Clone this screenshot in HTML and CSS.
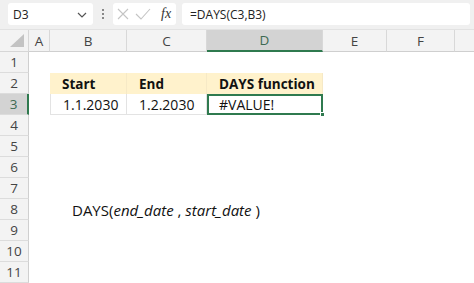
FILE: index.html
```html
<!DOCTYPE html>
<html>
<head>
<meta charset="utf-8">
<link rel="stylesheet" href="styles.css">
</head>
<body>
<div class="app">
  <div class="fbar">
    <div class="namebox"><span>D3</span>
      <svg class="chev" width="10" height="6" viewBox="0 0 10 6"><path d="M1 1 L5 5 L9 1" fill="none" stroke="#555" stroke-width="1.2"/></svg>
    </div>
    <div class="dots">
      <svg width="4" height="12" viewBox="0 0 4 12"><circle cx="2" cy="2" r="1" fill="#666"/><circle cx="2" cy="6" r="1" fill="#666"/><circle cx="2" cy="10" r="1" fill="#666"/></svg>
    </div>
    <div class="btnbox">
      <svg width="14" height="14" viewBox="0 0 14 14"><path d="M2 2 L12 12 M12 2 L2 12" stroke="#c4c4c4" stroke-width="1.1" fill="none"/></svg>
      <svg width="16" height="14" viewBox="0 0 16 14"><path d="M1 7 L6 12 L15 2" stroke="#c4c4c4" stroke-width="1.1" fill="none"/></svg>
      <span class="fx">fx</span>
    </div>
    <div class="formula">=DAYS(C3,B3)</div>
  </div>
  <div class="grid">
    <div class="corner"><svg width="20" height="14" viewBox="0 0 20 14"><path d="M18 0 L18 13 L4 13 Z" fill="#c3c3c3"/></svg></div>
    <div class="ch">A</div>
    <div class="ch">B</div>
    <div class="ch">C</div>
    <div class="ch sel">D</div>
    <div class="ch">E</div>
    <div class="ch">F</div>
    <div class="ch last"></div>

    <div class="rh">1</div><div class="row-fill"></div>

    <div class="rh">2</div>
    <div class="c"></div>
    <div class="c th">Start</div>
    <div class="c th">End</div>
    <div class="c th">DAYS function</div>
    <div class="c span3"></div>

    <div class="rh selr">3</div>
    <div class="c"></div>
    <div class="c td first">1.1.2030</div>
    <div class="c td">1.2.2030</div>
    <div class="c td active">#VALUE!<span class="handle"></span></div>
    <div class="c span3"></div>

    <div class="rh">4</div><div class="row-fill"></div>
    <div class="rh">5</div><div class="row-fill"></div>
    <div class="rh">6</div><div class="row-fill"></div>
    <div class="rh">7</div><div class="row-fill"></div>
    <div class="rh">8</div><div class="c"></div><div class="c syntax"><span>DAYS(<i>end_date</i> , <i>start_date</i> )</span></div>
    <div class="rh">9</div><div class="row-fill"></div>
    <div class="rh">10</div><div class="row-fill"></div>
    <div class="rh">11</div><div class="row-fill"></div>
  </div>
</div>
</body>
</html>
```
FILE: styles.css
```css
* { box-sizing: border-box; }
html, body { margin: 0; padding: 0; }
body {
  width: 474px;
  height: 283px;
  overflow: hidden;
  background: #ffffff;
  font-family: "Open Sans", "Liberation Sans", sans-serif;
  color: #222;
}
.app { display: flex; flex-direction: column; height: 283px; }
.fbar {
  height: 30px;
  background: #f0f0f0;
  display: flex;
  align-items: flex-start;
  padding: 3px 4px 0 8px;
  border-bottom: 1px solid #e2e2e2;
}
.namebox {
  width: 85px;
  height: 22px;
  background: #fff;
  border-radius: 3px;
  display: flex;
  align-items: center;
  justify-content: space-between;
  padding: 0 6px 0 5px;
  font-size: 12px;
  color: #222;
}
.chev { margin-top: 1px; }
.dots { width: 20px; height: 22px; display: flex; align-items: center; justify-content: center; }
.btnbox {
  width: 63px;
  height: 22px;
  background: #fff;
  border-radius: 3px;
  display: flex;
  align-items: center;
  gap: 5px;
  padding-left: 3px;
}
.fx {
  font-family: "Liberation Serif", serif;
  font-style: italic;
  font-size: 14px;
  color: #333;
  margin-left: 5px;
}
.formula {
  flex: 1;
  margin-left: 6px;
  height: 22px;
  background: #fff;
  border-radius: 3px;
  font-size: 12px;
  display: flex;
  align-items: center;
  padding-left: 8px;
  color: #222;
}
.grid {
  display: grid;
  grid-template-columns: 29px 21px 77px 80px 116px 64px 68px 19px;
  grid-template-rows: 22px repeat(11, 21px);
  flex: 1;
}
.corner {
  background: #f3f3f3;
  border-right: 1px solid #d6d6d6;
  border-bottom: 1px solid #d6d6d6;
  display: flex;
  align-items: flex-end;
  justify-content: flex-end;
  padding: 0 2px 3px 0;
}
.ch {
  background: #f3f3f3;
  border-right: 1px solid #d8d8d8;
  border-bottom: 1px solid #cfcfcf;
  display: flex;
  align-items: center;
  justify-content: center;
  font-size: 13.5px;
  color: #444;
}
.ch.sel {
  background: #d3d3d3;
  border-bottom: 2px solid #2f7a4f;
  color: #3e6a52;
}
.ch.last { border-right: none; }
.rh {
  grid-column: 1;
  background: #f3f3f3;
  border-right: 1px solid #cfcfcf;
  border-bottom: 1px solid #dcdcdc;
  display: flex;
  align-items: center;
  justify-content: center;
  font-size: 13.5px;
  color: #444;
}
.rh.selr {
  background: #d3d3d3;
  border-right: 2px solid #2f7a4f;
  color: #3e6a52;
}
.row-fill { grid-column: 2 / 9; }
.span3 { grid-column: 6 / 9; }
.c {
  display: flex;
  align-items: center;
  font-size: 14px;
  color: #111;
  position: relative;
}
.th {
  background: #fff2cc;
  font-weight: bold;
  font-size: 13.5px;
  padding-left: 12px;
  border-right: 1px solid #f6e9c6;
}
.td {
  padding-left: 12px;
  border-right: 1px solid #e3e3e3;
  border-bottom: 1px solid #e3e3e3;
}
.td.first { border-left: 1px solid #e3e3e3; }
.active {
  border: 2px solid #2f7a4f;
  padding-left: 10px;
}
.handle {
  position: absolute;
  right: -4px;
  bottom: -4px;
  width: 5px;
  height: 5px;
  background: #2f7a4f;
  border: 1px solid #fff;
}
.syntax {
  grid-column: 3 / 8;
  padding-left: 22px;
  white-space: pre;
  font-size: 15px;
}
```
